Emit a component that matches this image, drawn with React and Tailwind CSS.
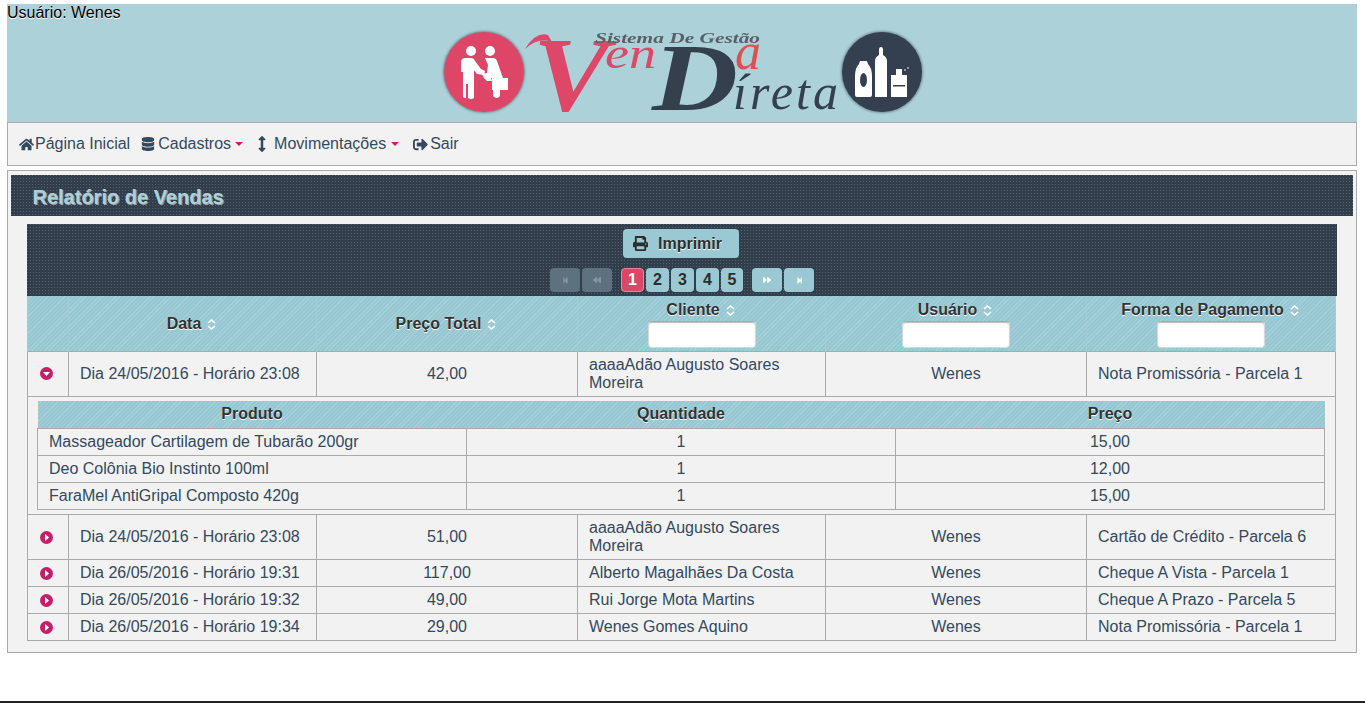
import { FaHome, FaDatabase, FaSignOutAlt, FaPrint, FaStepBackward, FaBackward, FaForward, FaStepForward, FaArrowsAltV } from "react-icons/fa";

const font = "font-['Liberation_Sans',Arial,sans-serif]";
const stripes = "bg-[repeating-linear-gradient(135deg,#97c7d1_0,#97c7d1_2px,#a5d0d9_2px,#a5d0d9_3px)]";
const dots = "bg-[#333e4c] bg-[conic-gradient(at_1px_1px,transparent_75%,#53606e_0)] bg-[length:3px_3px]";
const cell = "border border-[#aaaaaa] px-[11px] py-1";
const headShadow = "[text-shadow:0_1px_0_#ffffff]";

const rowsBefore = [
  { open: true, date: "Dia 24/05/2016 - Horário 23:08", total: "42,00", client: "aaaaAdão Augusto Soares Moreira", pay: "Nota Promissória - Parcela 1" },
];
const rowsAfter = [
  { date: "Dia 24/05/2016 - Horário 23:08", total: "51,00", client: "aaaaAdão Augusto Soares Moreira", pay: "Cartão de Crédito - Parcela 6" },
  { date: "Dia 26/05/2016 - Horário 19:31", total: "117,00", client: "Alberto Magalhães Da Costa", pay: "Cheque A Vista - Parcela 1" },
  { date: "Dia 26/05/2016 - Horário 19:32", total: "49,00", client: "Rui Jorge Mota Martins", pay: "Cheque A Prazo - Parcela 5" },
  { date: "Dia 26/05/2016 - Horário 19:34", total: "29,00", client: "Wenes Gomes Aquino", pay: "Nota Promissória - Parcela 1" },
];
const products = [
  { name: "Massageador Cartilagem de Tubarão 200gr", qty: "1", price: "15,00" },
  { name: "Deo Colônia Bio Instinto 100ml", qty: "1", price: "12,00" },
  { name: "FaraMel AntiGripal Composto 420g", qty: "1", price: "15,00" },
];

function Logo() {
  return (
    <svg width="510" height="118" viewBox="427 4 510 118">
      <defs>
        <filter id="soft" x="-5%" y="-5%" width="110%" height="110%">
          <feGaussianBlur stdDeviation="0.5" />
        </filter>
        <filter id="halo" x="-10%" y="-10%" width="120%" height="120%">
          <feGaussianBlur stdDeviation="1.2" />
        </filter>
      </defs>
      <circle cx="484" cy="72" r="41" fill="#4a5a68" opacity="0.6" filter="url(#halo)" />
      <circle cx="484" cy="72" r="40" fill="#de4667" />
      <g fill="#ffffff" filter="url(#soft)">
        <circle cx="471" cy="51" r="5" />
        <circle cx="490" cy="51" r="5" />
        <path d="M461 62 q0 -4 5 -4 h5 q3 0 4 3 l6 8 l4 2 l-1 4 l-7 -1 l-3 -4 v28 q-3 2 -6 0 v-14 h-1 l-1 0 v14 h-1 q-2 0 -2 -2 v-24 h-2 z" />
        <path d="M485 58 h8 q3 0 4 3 l6 17 h-12 l1 3 h-5 l-3 -3 l-2 -4 l5 -1 l1 -8 z" />
        <rect x="492" y="78" width="16" height="12" />
        <path d="M493 90 h7 v6 q-3 4 -7 0 z" />
      </g>
      <circle cx="882" cy="72" r="41" fill="#4a5a68" opacity="0.6" filter="url(#halo)" />
      <circle cx="882" cy="72" r="40" fill="#34404f" />
      <g fill="#ffffff" filter="url(#soft)">
        <path d="M860 61 h7 l1 3 q4 4 4 12 v19 q0 2 -2 2 h-13 q-2 0 -2 -2 v-19 q0 -8 4 -12 z" />
        <path d="M879 50 q0 -3 2 -3 q2 0 2 3 v5 q4 2 4 6 v36 h-12 v-36 q0 -4 4 -6 z" />
        <rect x="891" y="75" width="16" height="22" />
        <rect x="896" y="69" width="6" height="6" />
        <circle cx="905" cy="70" r="0.8" />
        <circle cx="908" cy="68" r="0.8" />
      </g>
      <ellipse cx="863.5" cy="80" rx="3.5" ry="7" fill="#34404f" />
      <rect x="893" y="85" width="12" height="1.5" fill="#34404f" />
      <g fontFamily="'Liberation Serif', serif" fontStyle="italic" filter="url(#soft)">
        <path d="M525 49 Q536 31 548 35 L552 42 Q538 37 525 49 Z" fill="#de4667" />
        <text x="533" y="110" fontSize="106" fontWeight="bold" fill="#de4667" textLength="76" lengthAdjust="spacingAndGlyphs">V</text>
        <text x="605" y="68" fontSize="45" fill="#de4667" textLength="51" lengthAdjust="spacingAndGlyphs">en</text>
        <text x="735" y="69" fontSize="52" fill="#d9534f">a</text>
        <text x="652" y="110" fontSize="95" fontWeight="bold" fill="#34404f" textLength="86" lengthAdjust="spacingAndGlyphs">D</text>
        <text x="733" y="109" fontSize="50" fill="#34404f" textLength="105">íreta</text>
        <text x="595" y="43" fontSize="15" fontWeight="bold" fill="#5a6068" textLength="165" lengthAdjust="spacingAndGlyphs">Sistema De Gestão</text>
      </g>
    </svg>
  );
}

function Caret({ gap }) {
  return <span className={`${gap} inline-block border-x-[4px] border-t-[4px] border-x-transparent border-t-[#c4206a] align-middle`} />;
}

function SortIcon() {
  return (
    <svg className="ml-[6px] inline-block align-[-1px]" width="9" height="11" viewBox="0 0 9 11" fill="none" stroke="#ffffff" strokeWidth="1.6">
      <path d="M1 4 L4.5 1 L8 4" />
      <path d="M1 7 L4.5 10 L8 7" />
    </svg>
  );
}

function Toggle({ open }) {
  return (
    <svg className="ml-[12px] block" width="13" height="13" viewBox="0 0 13 13">
      <circle cx="6.5" cy="6.5" r="6.5" fill="#c4206a" />
      {open ? <path d="M3 5 H10 L6.5 9 Z" fill="#ffffff" /> : <path d="M5 3 V10 L9 6.5 Z" fill="#ffffff" />}
    </svg>
  );
}

function PageBtn({ children, dim, width = "w-[30px]", active }) {
  let tone = "bg-[#9ac9d3] text-[#2d2d2d]";
  if (dim) tone = "bg-[#5d717f] text-[#8697a3]";
  if (active) tone = "bg-[#de4667] text-white border border-[#e98aa0]";
  return (
    <span className={`flex h-6 items-center justify-center rounded-[4px] text-[16px] font-bold ${width} ${tone}`}>
      {children}
    </span>
  );
}

function HeadFilter({ label }) {
  return (
    <th className={`h-[55px] border-x border-[#a3ccd5] p-0 text-center align-top text-[16px] leading-[18px] font-bold text-[#333333] ${headShadow}`}>
      <div className="pt-[5px] pr-[2px]">{label}<SortIcon /></div>
      <input className="mx-auto mt-[2px] block h-[27px] w-[108px] rounded-[4px] border border-[#d8d8d8] border-t-[#aaaaaa] bg-white shadow-[inset_0_1px_1px_#bbbbbb]" />
    </th>
  );
}

function HeadPlain({ label }) {
  return (
    <th className={`border-x border-[#a3ccd5] p-0 pt-[2px] pr-[2px] text-center align-middle text-[16px] leading-[18px] font-bold text-[#333333] ${headShadow}`}>
      {label}<SortIcon />
    </th>
  );
}

function SaleRow({ row }) {
  return (
    <tr>
      <td className="border border-[#aaaaaa] p-0"><Toggle open={row.open} /></td>
      <td className={cell}>{row.date}</td>
      <td className={`${cell} text-center`}>{row.total}</td>
      <td className={cell}>{row.client}</td>
      <td className={`${cell} text-center`}>Wenes</td>
      <td className={cell}>{row.pay}</td>
    </tr>
  );
}

export default function App() {
  return (
    <div className={`${font} h-[703px] overflow-hidden bg-white pt-1 text-[16px] leading-[18px] text-[#34495e]`}>
      <div className="ml-[7px] w-[1350px]">
        <div className="relative flex h-[118px] items-center justify-center bg-[#acd1d9]">
          <span className="absolute top-0 left-0 text-black [text-shadow:0_1px_0_#ffffff]">Usuário: Wenes</span>
          <Logo />
        </div>

        <nav className="flex h-[44px] items-center border border-[#aaaaaa] bg-[#f2f2f2] pl-[10px]">
          <FaHome className="ml-px mr-px text-[15px]" />
          <span className="mr-[11px]">Página Inicial</span>
          <FaDatabase className="mr-[3px] text-[14px]" />
          <span>Cadastros</span>
          <Caret gap="ml-1" />
          <FaArrowsAltV className="ml-[11px] mr-1 text-[16px]" />
          <span>Movimentações</span>
          <Caret gap="ml-[5px]" />
          <FaSignOutAlt className="ml-[14px] mr-[2px] text-[15px]" />
          <span>Sair</span>
        </nav>

        <div className="mt-1 h-[483px] border border-[#aaaaaa] bg-[#f2f2f2] px-[3px] pt-1">
          <div className={`${dots} flex h-[41px] items-center pt-[2px] pl-[21.5px] text-[20px] font-bold text-[#acd1d9] [text-shadow:1px_1px_0_#ffffff80]`}>
            Relatório de Vendas
          </div>

          <div className="mx-4 mt-2">
            <div className={`${dots} h-[72px] pt-[5px]`}>
              <div className="flex justify-center pr-[2px]">
                <button className={`flex h-[29px] w-[116px] items-center justify-start gap-[10px] rounded-[4px] bg-[#9ac9d3] pl-[10px] font-bold text-[#2d2d2d] ${headShadow}`}>
                  <FaPrint className="text-[15px]" />
                  Imprimir
                </button>
              </div>
              <div className="mt-[10px] flex justify-center">
                <div className="flex gap-[2px]">
                  <PageBtn dim><FaStepBackward className="text-[7px]" /></PageBtn>
                  <PageBtn dim><FaBackward className="text-[8px]" /></PageBtn>
                </div>
                <div className="mx-[9px] flex gap-[2px]">
                  <PageBtn active width="w-[23px]">1</PageBtn>
                  <PageBtn width="w-[23px]">2</PageBtn>
                  <PageBtn width="w-[23px]">3</PageBtn>
                  <PageBtn width="w-[23px]">4</PageBtn>
                  <PageBtn width="w-[22px]">5</PageBtn>
                </div>
                <div className="flex gap-[2px]">
                  <PageBtn width="w-[30px] text-white"><FaForward className="text-[8px] text-white" /></PageBtn>
                  <PageBtn width="w-[30px] text-white"><FaStepForward className="text-[7px] text-white" /></PageBtn>
                </div>
              </div>
            </div>

            <table className="w-[1308px] table-fixed border-collapse">
              <colgroup>
                <col className="w-[41px]" />
                <col className="w-[248px]" />
                <col className="w-[261px]" />
                <col className="w-[248px]" />
                <col className="w-[261px]" />
                <col className="w-[249px]" />
              </colgroup>
              <thead className={stripes}>
                <tr>
                  <th className="border-x border-[#a3ccd5] p-0" />
                  <HeadPlain label="Data" />
                  <HeadPlain label="Preço Total" />
                  <HeadFilter label="Cliente" />
                  <HeadFilter label="Usuário" />
                  <HeadFilter label="Forma de Pagamento" />
                </tr>
              </thead>
              <tbody>
                {rowsBefore.map((row, i) => <SaleRow key={i} row={row} />)}
                <tr>
                  <td colSpan={6} className="border border-[#aaaaaa] pt-1 pr-[10px] pb-1 pl-[9px]">
                    <table className="w-[1288px] table-fixed border-collapse">
                      <thead className={stripes}>
                        <tr>
                          <th className={`h-[28px] p-0 text-center font-bold text-[#333333] ${headShadow}`}>Produto</th>
                          <th className={`p-0 text-center font-bold text-[#333333] ${headShadow}`}>Quantidade</th>
                          <th className={`p-0 text-center font-bold text-[#333333] ${headShadow}`}>Preço</th>
                        </tr>
                      </thead>
                      <tbody>
                        {products.map((p, i) => (
                          <tr key={i}>
                            <td className={cell}>{p.name}</td>
                            <td className={`${cell} text-center`}>{p.qty}</td>
                            <td className={`${cell} text-center`}>{p.price}</td>
                          </tr>
                        ))}
                      </tbody>
                    </table>
                  </td>
                </tr>
                {rowsAfter.map((row, i) => <SaleRow key={i} row={row} />)}
              </tbody>
            </table>
          </div>
        </div>
      </div>
      <div className="mt-[48px] h-[2px] bg-[#222222]" />
    </div>
  );
}
